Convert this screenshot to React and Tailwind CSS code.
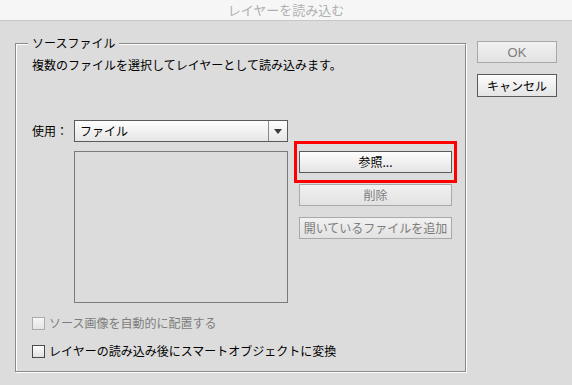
export default function App() {
  const btn =
    'h-[22px] flex items-center justify-center border bg-linear-to-b leading-none';
  const enabled = 'border-[#5a5a5a] from-[#fdfdfd] to-[#e4e4e4] text-black';
  const disabled = 'border-[#a9a9a9] from-[#f1f1f1] to-[#e2e2e2] text-[#7c7c7c]';

  return (
    <div className="w-[572px] h-[385px] bg-[#dcdcdc] flex flex-col overflow-hidden text-[12px] text-black font-['Noto_Sans_CJK_JP','Noto_Sans',sans-serif]">
      {/* Title bar */}
      <div className="h-[21px] shrink-0 bg-[#f6f6f6] border-b border-[#c6c6c6] flex items-center justify-center text-[13px] text-[#b0b0b0]">
        レイヤーを読み込む
      </div>

      <div className="flex pl-[15px] pt-[14px]">
        {/* Source files group */}
        <fieldset className="w-[451px] h-[337px] border border-[#8a8a8a] shadow-[inset_1px_1px_0_#fff,1px_1px_0_#fff] pl-[12px]">
          <legend className="px-[4px] leading-[16px] bg-[#dcdcdc]">ソースファイル</legend>

          <div className="ml-[4px] flex flex-col">
            <div className="mt-[6px] leading-[16px]">
              複数のファイルを選択してレイヤーとして読み込みます。
            </div>

            {/* Use: select */}
            <div className="mt-[47px] flex items-center h-[22px]">
              <span className="w-[42px]">使用：</span>
              <div className="w-[214px] h-[22px] flex border border-[#5a5a5a] bg-linear-to-b from-[#fdfdfd] to-[#e6e6e6]">
                <span className="flex-1 pl-[5px] flex items-center">ファイル</span>
                <span className="w-[19px] border-l border-[#8a8a8a] flex items-center justify-center">
                  <svg width="8" height="5" viewBox="0 0 8 5">
                    <path d="M0 0 H8 L4 5 Z" fill="#3a3a3a" />
                  </svg>
                </span>
              </div>
            </div>

            {/* File list + buttons */}
            <div className="mt-[9px] flex">
              <div className="ml-[42px] w-[214px] h-[152px] border border-[#7a7a7a] bg-[#dcdcdc]" />
              <div className="ml-[11px] w-[153px] flex flex-col gap-[11px]">
                <div className="relative">
                  <div className={`${btn} ${enabled}`}>参照...</div>
                  <div className="absolute -left-[5px] -right-[5px] -top-[10px] -bottom-[10px] border-[3px] border-[#f00]" />
                </div>
                <div className={`${btn} ${disabled}`}>削除</div>
                <div className={`${btn} ${disabled} text-[#6a6a6a]`}>開いているファイルを追加</div>
              </div>
            </div>

            {/* Checkboxes */}
            <div className="mt-[12px] flex items-center leading-[16px] text-[#7c7c7c]">
              <span className="w-[13px] h-[13px] border border-[#ababab] bg-linear-to-b from-[#f6f6f6] to-[#e4e4e4] mr-[4px]" />
              ソース画像を自動的に配置する
            </div>
            <div className="mt-[12px] flex items-center leading-[16px]">
              <span className="w-[13px] h-[13px] border border-[#4a4a4a] bg-linear-to-b from-[#fdfdfd] to-[#e0e0e0] mr-[4px]" />
              レイヤーの読み込み後にスマートオブジェクトに変換
            </div>
          </div>
        </fieldset>

        {/* OK / Cancel */}
        <div className="ml-[11px] mt-[6px] w-[80px] flex flex-col gap-[11px]">
          <div className={`${btn} ${disabled} font-['Liberation_Sans',sans-serif] text-[13px]`}>OK</div>
          <div className={`${btn} ${enabled} h-[23px]`}>キャンセル</div>
        </div>
      </div>
    </div>
  );
}
